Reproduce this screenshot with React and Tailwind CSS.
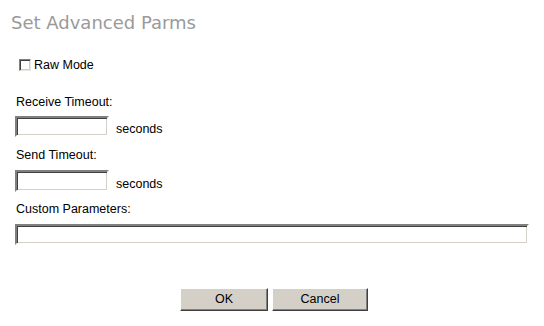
import React from "react";

function Inset({ className }) {
  return (
    <div
      className={`border-2 border-t-[#808080] border-l-[#808080] border-b-white border-r-white bg-white shadow-[inset_1px_1px_0_#404040,inset_-1px_-1px_0_#d4d0c8] ${className}`}
    />
  );
}

function Btn({ children, w }) {
  return (
    <div
      className={`${w} h-[23px] flex items-center justify-center bg-[#d4d0c8] border border-t-white border-l-white border-b-[#404040] border-r-[#404040] shadow-[inset_-1px_-1px_0_#808080] text-black`}
    >
      {children}
    </div>
  );
}

export default function App() {
  return (
    <div className="w-[544px] h-[326px] bg-white overflow-hidden font-['Liberation_Sans',Arial,sans-serif] text-[12.5px] leading-[15px] text-black">
      <div className="pl-[11px] pt-[12px] text-[18px] leading-[22px] text-[#9a9a9a] font-['DejaVu_Sans',Verdana,sans-serif]">
        Set Advanced Parms
      </div>
      <div className="mt-[25px] h-[12px] flex items-center pl-[19px]">
        <div className="w-[12px] h-[12px] border border-t-[#808080] border-l-[#808080] border-b-[#e8e6e0] border-r-[#e8e6e0] bg-white shadow-[inset_1px_1px_0_#404040,inset_-1px_-1px_0_#d4d0c8]" />
        <span className="ml-[3px]">Raw Mode</span>
      </div>
      <div className="pl-[16px]">
        <div className="mt-[24px]">Receive Timeout:</div>
        <div className="mt-[6px] flex items-end">
          <Inset className="w-[94px] h-[21px] -ml-[1px]" />
          <span className="ml-[7px]">seconds</span>
        </div>
        <div className="mt-[11px]">Send Timeout:</div>
        <div className="mt-[7px] flex items-end">
          <Inset className="w-[94px] h-[22px] -ml-[1px]" />
          <span className="ml-[7px]">seconds</span>
        </div>
        <div className="mt-[10px]">Custom Parameters:</div>
        <Inset className="mt-[7px] w-[514px] h-[21px] -ml-[1px]" />
      </div>
      <div className="mt-[43px] flex pl-[180px] gap-[4px]">
        <Btn w="w-[88px]">OK</Btn>
        <Btn w="w-[96px]">Cancel</Btn>
      </div>
    </div>
  );
}
